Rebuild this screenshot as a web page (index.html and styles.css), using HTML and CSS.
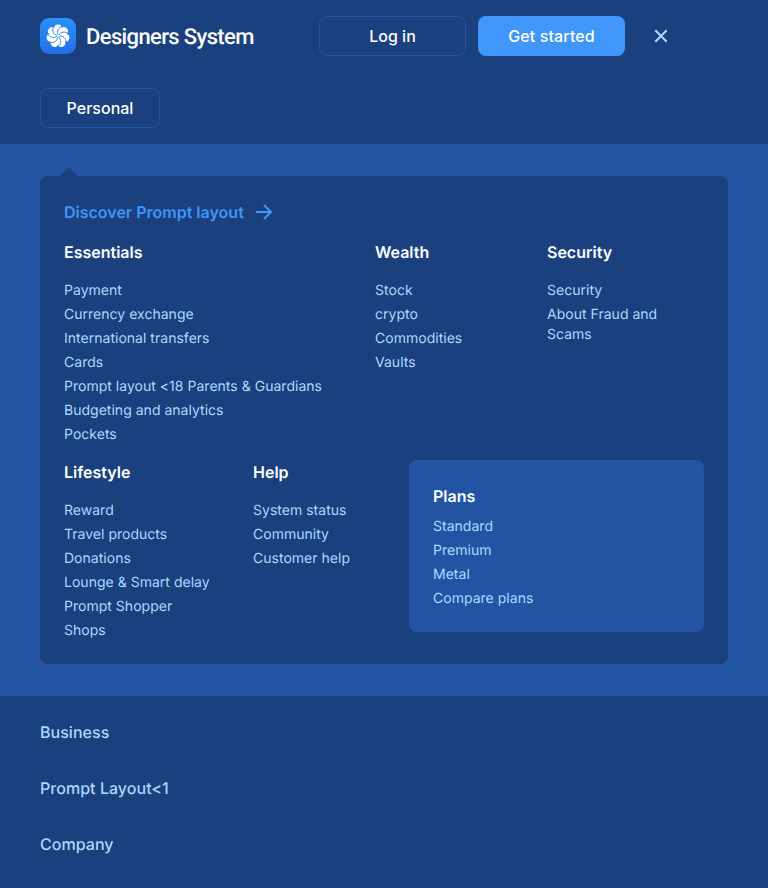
FILE: index.html
```html
<!DOCTYPE html>
<html lang="en">
<head>
<meta charset="utf-8">
<title>Designers System</title>
<link rel="stylesheet" href="styles.css">
</head>
<body>
<header class="header">
  <a class="brand">
    <svg class="logo" viewBox="0 0 36 36" width="36" height="36">
      <defs>
        <linearGradient id="tile" x1="0" y1="0" x2="0" y2="1"><stop offset="0" stop-color="#2b91fb"/><stop offset="1" stop-color="#236fe6"/></linearGradient>
        <circle id="lobe" cx="18" cy="10.300" r="3.900"/>
        <path id="gap" d="M17.500 16.800C15.400 14 15.800 10 19.800 7.600"/>
      </defs>
      <rect width="36" height="36" rx="9" fill="url(#tile)"/>
      <g fill="#fff">
        <circle cx="18" cy="18" r="8.500"/>
        <use href="#lobe"/>
        <use href="#lobe" transform="rotate(51.430 18 18)"/>
        <use href="#lobe" transform="rotate(102.860 18 18)"/>
        <use href="#lobe" transform="rotate(154.290 18 18)"/>
        <use href="#lobe" transform="rotate(205.710 18 18)"/>
        <use href="#lobe" transform="rotate(257.140 18 18)"/>
        <use href="#lobe" transform="rotate(308.570 18 18)"/>
      </g>
      <g fill="none" stroke="#2a80f1" stroke-width="0.850">
        <use href="#gap" transform="rotate(16 18 18)"/>
        <use href="#gap" transform="rotate(67.430 18 18)"/>
        <use href="#gap" transform="rotate(118.860 18 18)"/>
        <use href="#gap" transform="rotate(170.290 18 18)"/>
        <use href="#gap" transform="rotate(221.710 18 18)"/>
        <use href="#gap" transform="rotate(273.140 18 18)"/>
        <use href="#gap" transform="rotate(324.570 18 18)"/>
      </g>
    </svg>
    <span class="brand-name">Designers System</span>
  </a>
  <div class="actions">
    <button class="btn btn-outline">Log in</button>
    <button class="btn btn-primary">Get started</button>
  </div>
  <button class="close" aria-label="Close">
    <svg viewBox="0 0 24 24" width="24" height="24"><path d="M6.300 6.300l11.400 11.400M17.700 6.300l-11.400 11.400" stroke="#add8ff" stroke-width="2" fill="none"/></svg>
  </button>
</header>
<div class="tabs"><button class="btn btn-outline btn-tab">Personal</button></div>
<main class="section">
  <div class="panel">
    <a class="discover"><span>Discover Prompt layout</span>
      <svg viewBox="0 0 24 24" width="24" height="24"><path d="M4 12h15M12 5l7 7l-7 7" stroke="#4096fb" stroke-width="2" fill="none"/></svg>
    </a>
    <div class="row row-top">
      <section><h2>Essentials</h2>
        <ul><li>Payment</li><li>Currency exchange</li><li>International transfers</li><li>Cards</li><li>Prompt layout &lt;18 Parents &amp; Guardians</li><li>Budgeting and analytics</li><li>Pockets</li></ul></section>
      <section><h2>Wealth</h2>
        <ul><li>Stock</li><li>crypto</li><li>Commodities</li><li>Vaults</li></ul></section>
      <section><h2>Security</h2>
        <ul><li>Security</li><li>About Fraud and Scams</li></ul></section>
    </div>
    <div class="row row-bottom">
      <section><h2>Lifestyle</h2>
        <ul><li>Reward</li><li>Travel products</li><li>Donations</li><li>Lounge &amp; Smart delay</li><li>Prompt Shopper</li><li>Shops</li></ul></section>
      <section><h2>Help</h2>
        <ul><li>System status</li><li>Community</li><li>Customer help</li></ul></section>
      <section class="plans"><h2>Plans</h2>
        <ul><li>Standard</li><li>Premium</li><li>Metal</li><li>Compare plans</li></ul></section>
    </div>
  </div>
</main>
<nav class="menu"><a>Business</a><a>Prompt Layout&lt;1</a><a>Company</a></nav>
</body>
</html>
```
FILE: styles.css
```css
* { box-sizing: border-box; }
body {
  margin: 0;
  min-height: 888px;
  background: #1a407d;
  color: #fff;
  font-family: Inter, "Liberation Sans", sans-serif;
  text-rendering: geometricPrecision;
}
button { border: 0; background: none; padding: 0; font: inherit; color: inherit; }
svg { display: block; }
.header { display: flex; align-items: center; height: 72px; padding-left: 40px; }
.brand { display: flex; align-items: center; gap: 10px; width: 279px; }
.brand-name {
  padding-top: 3px;
  font: 500 22px/28px Roboto, sans-serif;
  letter-spacing: -0.63px;
  white-space: nowrap;
}
.actions { display: flex; gap: 12px; }
.btn {
  width: 147px;
  height: 40px;
  border-radius: 8px;
  font-size: 16px;
  font-weight: 500;
  line-height: 24px;
}
.btn-outline { border: 1px solid #2354a3; }
.btn-primary { background: #4096fb; letter-spacing: 0.12px; }
.close { margin-left: 24px; }
.tabs { height: 72px; padding: 16px 40px; }
.btn-tab { width: 120px; }
.section { padding: 32px 40px; background: #2354a3; }
.panel {
  position: relative;
  height: 488px;
  padding: 24px;
  border-radius: 8px;
  background: #1a407d;
}
.panel::before {
  content: "";
  position: absolute;
  left: 20px;
  top: -8px;
  width: 18px;
  height: 8px;
  background: #1a407d;
  clip-path: polygon(0 100%, 44% 6%, 50% 0, 56% 6%, 100% 100%);
}
.discover {
  display: flex;
  gap: 8px;
  font-size: 16px;
  font-weight: 600;
  line-height: 24px;
  color: #4096fb;
}
.row { display: grid; }
.row-top { margin-top: 16px; grid-template-columns: 311px 172px 140px; }
.row-bottom { margin-top: 15px; grid-template-columns: 189px 156px 295px; align-items: start; }
h2 {
  margin: 0 0 17px;
  font-size: 16px;
  font-weight: 600;
  line-height: 24px;
}
ul {
  display: flex;
  flex-direction: column;
  gap: 4px;
  margin: 0;
  padding: 0;
  list-style: none;
  font-size: 14px;
  line-height: 20px;
  letter-spacing: 0.02px;
  color: #add8ff;
}
.plans { padding: 24px 24px 23px; border-radius: 8px; background: #2354a3; }
.plans h2 { margin-bottom: 9px; }
.menu {
  display: flex;
  flex-direction: column;
  gap: 32px;
  padding: 24px 40px;
  font-size: 16px;
  font-weight: 500;
  line-height: 24px;
  letter-spacing: 0.04px;
  color: #add8ff;
}
```
